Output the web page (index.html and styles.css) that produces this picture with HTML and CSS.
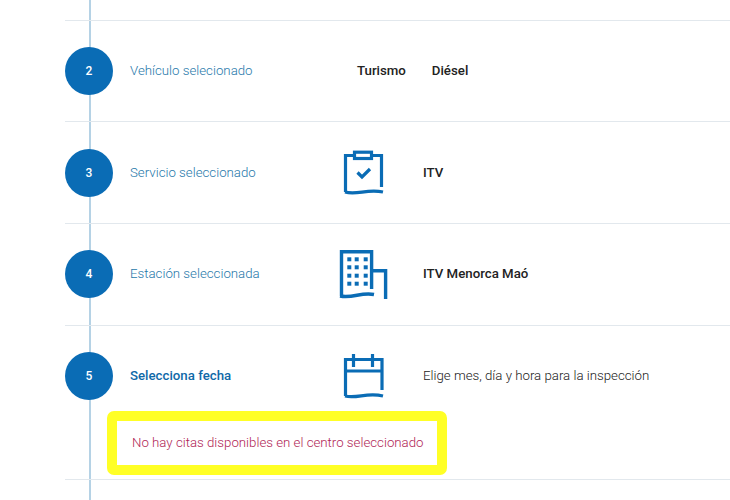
FILE: index.html
```html
<!DOCTYPE html>
<html lang="en">
<head>
    <meta charset="UTF-8">
    <title>Cita previa ITV</title>
    <link rel="stylesheet" href="styles.css">
</head>
<body>
    <div class="steps">
        <div class="timeline"></div>

        <div class="step">
            <div class="step-main">
                <div class="circle">2</div>
                <div class="label">Vehículo selecionado</div>
                <div class="vehicle">
                    <span class="value">Turismo</span>
                    <span class="value">Diésel</span>
                </div>
            </div>
        </div>

        <div class="step">
            <div class="step-main">
                <div class="circle">3</div>
                <div class="label">Servicio seleccionado</div>
                <svg class="icon" width="54" height="50" viewBox="0 0 54 50" fill="none" stroke="#0a6cb5" stroke-width="3.2">
                    <path d="M17 7.5H8.5V44" />
                    <path d="M35 7.5H44.5V39" />
                    <path d="M8 44C20 47.5 30 40.5 46 44" />
                    <rect x="17.5" y="4.2" width="17" height="6.3" />
                    <path d="M20.5 24.5L25 29L33 21" />
                </svg>
                <div class="value">ITV</div>
            </div>
        </div>

        <div class="step">
            <div class="step-main">
                <div class="circle">4</div>
                <div class="label">Estación seleccionada</div>
                <svg class="icon" width="54" height="50" viewBox="0 0 54 50" fill="none" stroke="#0a6cb5" stroke-width="3.4">
                    <path d="M4.5 47V2.7H34.6V40" />
                    <path d="M3 47C16 49.5 24 43 37 45.5" />
                    <path d="M34.6 21.7H48.6V50" />
                    <g class="windows" fill="#0a6cb5" stroke="none">
                        <rect x="10.3" y="8.3" width="4" height="4" />
                        <rect x="17.7" y="8.3" width="4" height="4" />
                        <rect x="26.7" y="8.3" width="4" height="4" />
                        <rect x="10.3" y="16.3" width="4" height="4" />
                        <rect x="17.7" y="16.3" width="4" height="4" />
                        <rect x="26.7" y="16.3" width="4" height="4" />
                        <rect x="10.3" y="24.7" width="4" height="4" />
                        <rect x="17.7" y="24.7" width="4" height="4" />
                        <rect x="26.7" y="24.7" width="4" height="4" />
                        <rect x="10.3" y="32.7" width="4" height="4" />
                        <rect x="17.7" y="32.7" width="4" height="4" />
                        <rect x="26.7" y="32.7" width="4" height="4" />
                    </g>
                </svg>
                <div class="value">ITV Menorca Maó</div>
            </div>
        </div>

        <div class="step">
            <div class="step-main step-main-open">
                <div class="circle">5</div>
                <div class="label label-active">Selecciona fecha</div>
                <svg class="icon" width="54" height="50" viewBox="0 0 54 50" fill="none" stroke="#0a6cb5" stroke-width="3.2">
                    <path d="M8.5 45V8.5H45V39" />
                    <path d="M8.5 20H45" />
                    <path d="M16.5 3V16M35.5 3V16" />
                    <path d="M8 45C20 48 30 41 46 45" />
                </svg>
                <div class="hint">Elige mes, día y hora para la inspección</div>
            </div>
            <div class="notice">No hay citas disponibles en el centro seleccionado</div>
        </div>
    </div>
</body>
</html>
```

FILE: styles.css
```css
html, body {
    height: 100%;
}
body {
    margin: 0;
    overflow: hidden;
    background: #fff;
    font-family: Roboto, "Liberation Sans", sans-serif;
    font-size: 13.25px;
    color: #222;
}
.steps {
    position: relative;
    min-height: 100vh;
    margin-left: 65px;
    padding-top: 19.6px;
    box-sizing: border-box;
}
.timeline {
    position: absolute;
    top: 0;
    bottom: 0;
    left: 24px;
    width: 2px;
    background: #b5d2e5;
}
.step {
    position: relative;
    border-top: 1px solid #e2e8ed;
}
.step:last-child {
    border-bottom: 1px solid #e2e8ed;
    padding-bottom: 4px;
}
.step-main {
    display: flex;
    align-items: center;
    height: 48px;
    padding: 26.35px 0;
}
.step-main-open {
    padding-bottom: 0;
}
.circle {
    flex: none;
    width: 48px;
    height: 48px;
    margin-right: 17px;
    border-radius: 50%;
    background: #0a6cb5;
    color: #fff;
    font-size: 12px;
    font-weight: 500;
    line-height: 48px;
    text-align: center;
}
.label {
    flex: none;
    width: 207px;
    margin-top: -1px;
    font-weight: 300;
    color: #1f78aa;
}
.label-active {
    font-weight: 500;
    color: #0f69a8;
}
.vehicle {
    display: flex;
    gap: 26px;
    margin-left: 20px;
}
.icon {
    flex: none;
    margin-right: 32px;
}
.value {
    margin-top: -1px;
    font-weight: 500;
    color: #222;
}
.hint {
    margin-top: -1px;
    font-weight: 300;
    color: #222;
}
.notice {
    width: 305px;
    height: 44px;
    margin: 11px 0 0 42px;
    padding-left: 15px;
    border: 10px solid #ffff26;
    border-radius: 7px;
    font-weight: 300;
    line-height: 44px;
    color: #b01d55;
}
```
